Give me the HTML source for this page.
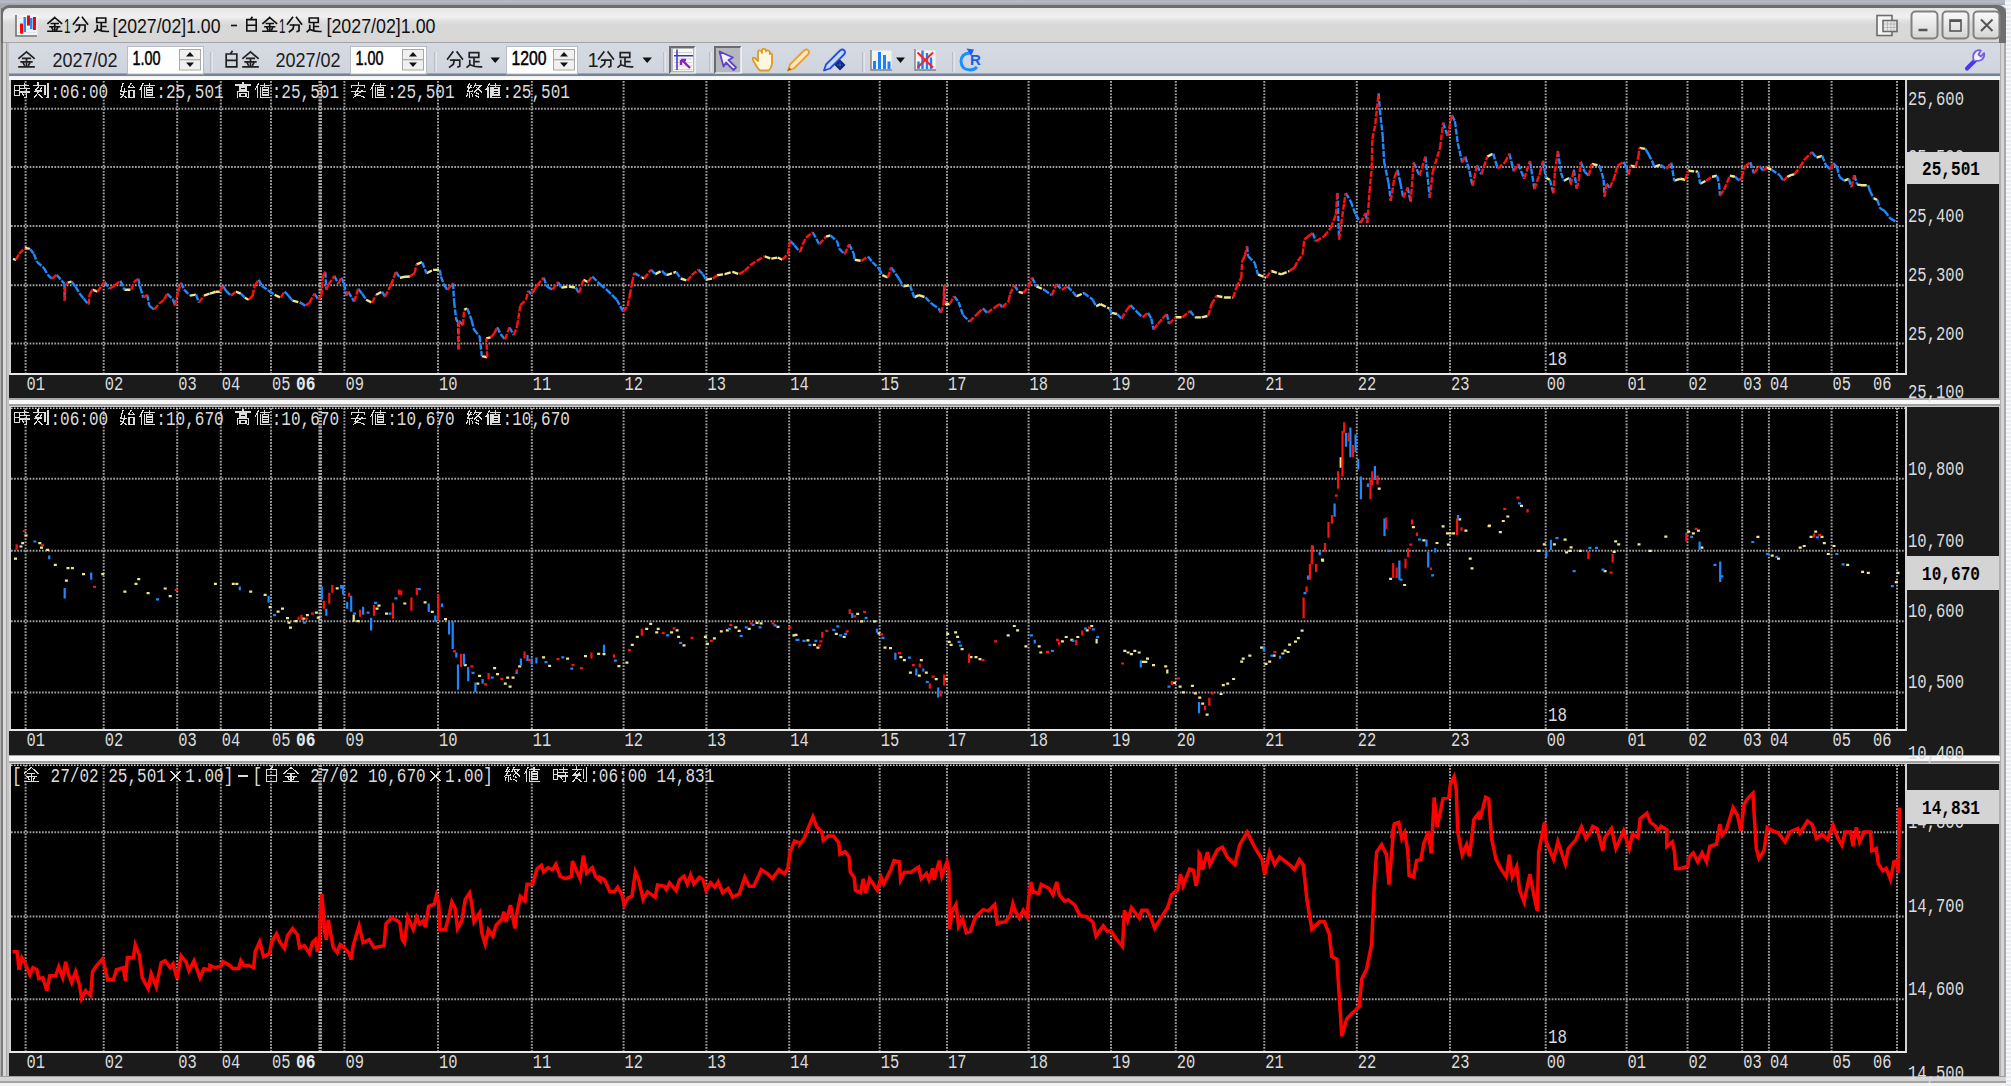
<!DOCTYPE html>
<html><head><meta charset="utf-8"><style>
*{margin:0;padding:0;box-sizing:border-box}
body{width:2011px;height:1086px;position:relative;overflow:hidden;background:#f4f4f4;font-family:"Liberation Sans",sans-serif}
.ab{position:absolute}
text.ax{font-family:"Liberation Mono",monospace;font-size:20px;fill:#dcdcdc;transform-box:fill-box}
text.axb{font-family:"Liberation Mono",monospace;font-size:20px;font-weight:bold;fill:#e8e8e8}
text.pl{font-family:"Liberation Mono",monospace;font-size:20px;fill:#dcdcdc}
text.bx{font-family:"Liberation Mono",monospace;font-size:20px;font-weight:bold;fill:#000}
text.tt{font-family:"Liberation Sans",sans-serif;font-size:21px;fill:#101010}
text.tb{font-family:"Liberation Sans",sans-serif;font-size:20px;fill:#1c1c1c}
text.inp{font-family:"Liberation Sans",sans-serif;font-size:19.5px;fill:#000;stroke:#000;stroke-width:0.5px}
text.rr{font-family:"Liberation Sans",sans-serif;font-size:15px;font-weight:bold;fill:#1a60e0}
text.hd{font-family:"Liberation Mono",monospace;font-size:20px;fill:#dcdcdc}
</style></head><body>
<div class="ab" style="left:0;top:0;width:2011px;height:5px;background:linear-gradient(#aeb2bc,#b8bcc6 35%,#a0a4ac)"></div>
<div class="ab" style="left:2005px;top:0;width:6px;height:1086px;background:repeating-linear-gradient(#e8ecf2 0 2px,#f6f8fb 2px 4px)"></div>
<div class="ab" style="left:0;top:5px;width:14px;height:14px;background:#a4a8b0"></div>
<div class="ab" style="left:1992px;top:5px;width:14px;height:14px;background:#e8ecf2"></div>
<div class="ab" style="left:0;top:5px;width:2006px;height:1078px;background:#c4c4c4;border-radius:8px 8px 0 0"></div>
<div class="ab" style="left:0;top:8px;width:9px;height:1075px;background:linear-gradient(90deg,#b0b0b0 0 1px,#7c7c7c 1px 3px,#d8d8d8 3px 6px,#a8a8a8 6px 7px,#c4c4c4 7px 9px)"></div>
<div class="ab" style="left:1999px;top:8px;width:7px;height:1075px;background:linear-gradient(90deg,#b0b0b0 0 2px,#d4d4d4 2px 5px,#a8a8a8 5px 7px)"></div>
<div class="ab" style="left:0;top:1076px;width:2006px;height:7px;background:linear-gradient(#a0a0a0 0 1px,#d4d4d4 1px 5px,#a4a4a4 5px 7px)"></div>
<div class="ab" style="left:1px;top:5px;width:2005px;height:38px;background:#6e6e6e;border-radius:8px 8px 0 0"></div>
<div class="ab" style="left:3px;top:7.5px;width:1996px;height:35.5px;background:linear-gradient(#e6e6e6,#ececec 5px,#f0f0f0 9px,#e0e0e0 13px,#d8d8d8 17px,#d8d8d8 33.5px,#a4a4a4 34.5px);border-radius:6px 6px 0 0"></div>
<div class="ab" style="left:9px;top:43px;width:1991px;height:34px;background:linear-gradient(#d6dae2,#d0d4dc 30px,#6e7e90 31px,#7c8a9a 33px,#f0f0f0 33px)"></div>
<div class="ab" style="left:9px;top:77px;width:1991px;height:3px;background:#f8f8f8"></div>
<div class="ab" style="left:9px;top:398px;width:1991px;height:10px;background:linear-gradient(#a8a8a8 0 2px,#f8f8f8 2px 6px,#a0a0a0 6px 8px,#d0d0d0 8px 10px)"></div>
<div class="ab" style="left:9px;top:755px;width:1991px;height:9px;background:linear-gradient(#a8a8a8 0 1px,#f8f8f8 1px 6px,#a0a0a0 6px 8px,#d0d0d0 8px 9px)"></div>
<svg width="0" height="0" style="position:absolute"><defs><symbol id="g0" viewBox="0 0 16 16" overflow="visible"><path d="M8 0.8L1 6.8M8 0.8L15 6.8M4.5 7H11.5M3 10.3H13M8 7V14.8M5 11.3L6 13.3M11 11.3L10 13.3M1 15H15" fill="none" stroke="currentColor" style="stroke-width:var(--sw,1.3)" stroke-linecap="square"/></symbol><symbol id="g1" viewBox="0 0 16 16" overflow="visible"><path d="M6 1L1 7.5M10 1L15 7.5M4 8.5H12.5V14.2L10.8 15M7.3 8.5L6.5 12.5L3 15.2" fill="none" stroke="currentColor" style="stroke-width:var(--sw,1.3)" stroke-linecap="square"/></symbol><symbol id="g2" viewBox="0 0 16 16" overflow="visible"><path d="M3.5 1.5H12.5V6H3.5ZM8 6V14M8 10H12.5M4 9V13L1.5 15.2M4.8 13.2Q9 15.2 15 15" fill="none" stroke="currentColor" style="stroke-width:var(--sw,1.3)" stroke-linecap="square"/></symbol><symbol id="g3" viewBox="0 0 16 16" overflow="visible"><path d="M8.5 0.5L7 2.5M3 2.8H13V15H3ZM3 8.8H13" fill="none" stroke="currentColor" style="stroke-width:var(--sw,1.3)" stroke-linecap="square"/></symbol><symbol id="g4" viewBox="0 0 16 16" overflow="visible"><path d="M1 3H5.5V13H1ZM1 8H5.5M7 3.2H15M11 1V6M6.5 6.3H15.5M6.3 9.5H15.5M13.2 6.5V14.6L11.3 15M8.8 11L10 13" fill="none" stroke="currentColor" style="stroke-width:var(--sw,1.3)" stroke-linecap="square"/></symbol><symbol id="g5" viewBox="0 0 16 16" overflow="visible"><path d="M5 0.5V2.3M1 3H10M5.8 4L2 8.5H8.5M8.5 5.5L1.5 15M4.5 11L9.5 15M12 3V11.5M15 0.8V14.8L13.3 15.2" fill="none" stroke="currentColor" style="stroke-width:var(--sw,1.3)" stroke-linecap="square"/></symbol><symbol id="g6" viewBox="0 0 16 16" overflow="visible"><path d="M3.5 1L1.3 9H7M5.5 5.8Q5 12 1.5 15.2M1.3 11.5L6.8 14.8M11.5 1L9 5.3H15M13.5 3.3L15 5.3M9.5 8H14.5V15H9.5Z" fill="none" stroke="currentColor" style="stroke-width:var(--sw,1.3)" stroke-linecap="square"/></symbol><symbol id="g7" viewBox="0 0 16 16" overflow="visible"><path d="M4.5 0.8L1 7.3M3 5V15.2M6 3H15.5M10.5 1V5M8 5H14V12.5H8ZM8 7.5H14M8 10H14M6 5V15H15.7" fill="none" stroke="currentColor" style="stroke-width:var(--sw,1.3)" stroke-linecap="square"/></symbol><symbol id="g8" viewBox="0 0 16 16" overflow="visible"><path d="M8 0V2M1 2.5H15M5 4.5H11V7.5H5ZM2.2 15.2V9.3H13.8V14.5L12.8 15.2M5 11H11V14H5Z" fill="none" stroke="currentColor" style="stroke-width:var(--sw,1.3)" stroke-linecap="square"/></symbol><symbol id="g9" viewBox="0 0 16 16" overflow="visible"><path d="M8 0V2M1.5 5V2.7H14.5V5M8 5.5L4.5 11.8Q10 12.5 14 15M11.8 8L3 15.2M1 9.2H15" fill="none" stroke="currentColor" style="stroke-width:var(--sw,1.3)" stroke-linecap="square"/></symbol><symbol id="g10" viewBox="0 0 16 16" overflow="visible"><path d="M4 0.8L1.5 5H5.5M5.3 2.8L1.3 9.3L6.5 8.5M4 9V15.2M1.7 11.3L1 14M6 11L7 13.3M10 0.8L8 4.8M9.5 3H15L9 9.5M10.3 4.5L15.5 9.5M11 10.5L12.7 11.5M10 13L12.5 14.5" fill="none" stroke="currentColor" style="stroke-width:var(--sw,1.3)" stroke-linecap="square"/></symbol></defs></svg>
<svg width="2011" height="1086" style="position:absolute;left:0;top:0" shape-rendering="crispEdges">
<defs><clipPath id="c1"><rect x="11" y="80" width="1894" height="293"/></clipPath><clipPath id="c2"><rect x="11" y="408" width="1894" height="321"/></clipPath><clipPath id="c3"><rect x="11" y="765" width="1894" height="286"/></clipPath></defs>
<rect x="9" y="80" width="1990" height="318" fill="#1b1b1b"/>
<rect x="10" y="80" width="1896" height="294" fill="#000"/>
<path d="M11 108.8H1905 M11 166.9H1905 M11 225.9H1905 M11 285.2H1905 M11 343.6H1905 M25.6 81V373 M103.7 81V373 M177.2 81V373 M220.8 81V373 M271.0 81V373 M320.2 81V373 M344.4 81V373 M438.0 81V373 M531.8 81V373 M623.6 81V373 M706.4 81V373 M789.2 81V373 M879.7 81V373 M947.0 81V373 M1028.6 81V373 M1111.0 81V373 M1175.8 81V373 M1264.3 81V373 M1356.8 81V373 M1450.0 81V373 M1545.7 81V373 M1626.6 81V373 M1687.5 81V373 M1742.2 81V373 M1768.9 81V373 M1831.6 81V373 M1897.0 81V373" stroke="#a0a0a0" stroke-width="2" stroke-dasharray="1.7 1.4" fill="none" shape-rendering="auto"/>
<path d="M320.2 81V373" stroke="#b0b0b0" stroke-width="3.6" stroke-dasharray="1.7 1.4" fill="none" shape-rendering="auto"/>
<path d="M10 80V374H1906V80" stroke="#e8e8e8" stroke-width="1.8" fill="none" shape-rendering="auto"/>
<text x="26.6" y="389.5" class="ax" textLength="18.5" lengthAdjust="spacingAndGlyphs">01</text>
<text x="104.7" y="389.5" class="ax" textLength="18.5" lengthAdjust="spacingAndGlyphs">02</text>
<text x="178.2" y="389.5" class="ax" textLength="18.5" lengthAdjust="spacingAndGlyphs">03</text>
<text x="221.8" y="389.5" class="ax" textLength="18.5" lengthAdjust="spacingAndGlyphs">04</text>
<text x="272.0" y="389.5" class="ax" textLength="18.5" lengthAdjust="spacingAndGlyphs">05</text>
<text x="345.4" y="389.5" class="ax" textLength="18.5" lengthAdjust="spacingAndGlyphs">09</text>
<text x="439.0" y="389.5" class="ax" textLength="18.5" lengthAdjust="spacingAndGlyphs">10</text>
<text x="532.8" y="389.5" class="ax" textLength="18.5" lengthAdjust="spacingAndGlyphs">11</text>
<text x="624.6" y="389.5" class="ax" textLength="18.5" lengthAdjust="spacingAndGlyphs">12</text>
<text x="707.4" y="389.5" class="ax" textLength="18.5" lengthAdjust="spacingAndGlyphs">13</text>
<text x="790.2" y="389.5" class="ax" textLength="18.5" lengthAdjust="spacingAndGlyphs">14</text>
<text x="880.7" y="389.5" class="ax" textLength="18.5" lengthAdjust="spacingAndGlyphs">15</text>
<text x="948.0" y="389.5" class="ax" textLength="18.5" lengthAdjust="spacingAndGlyphs">17</text>
<text x="1029.6" y="389.5" class="ax" textLength="18.5" lengthAdjust="spacingAndGlyphs">18</text>
<text x="1112.0" y="389.5" class="ax" textLength="18.5" lengthAdjust="spacingAndGlyphs">19</text>
<text x="1176.8" y="389.5" class="ax" textLength="18.5" lengthAdjust="spacingAndGlyphs">20</text>
<text x="1265.3" y="389.5" class="ax" textLength="18.5" lengthAdjust="spacingAndGlyphs">21</text>
<text x="1357.8" y="389.5" class="ax" textLength="18.5" lengthAdjust="spacingAndGlyphs">22</text>
<text x="1451.0" y="389.5" class="ax" textLength="18.5" lengthAdjust="spacingAndGlyphs">23</text>
<text x="1546.7" y="389.5" class="ax" textLength="18.5" lengthAdjust="spacingAndGlyphs">00</text>
<text x="1627.6" y="389.5" class="ax" textLength="18.5" lengthAdjust="spacingAndGlyphs">01</text>
<text x="1688.5" y="389.5" class="ax" textLength="18.5" lengthAdjust="spacingAndGlyphs">02</text>
<text x="1743.2" y="389.5" class="ax" textLength="18.5" lengthAdjust="spacingAndGlyphs">03</text>
<text x="1769.9" y="389.5" class="ax" textLength="18.5" lengthAdjust="spacingAndGlyphs">04</text>
<text x="1832.6" y="389.5" class="ax" textLength="18.5" lengthAdjust="spacingAndGlyphs">05</text>
<text x="296" y="389.5" class="axb" textLength="19.5" lengthAdjust="spacingAndGlyphs">06</text>
<text x="1873" y="389.5" class="ax" textLength="18.5" lengthAdjust="spacingAndGlyphs">06</text>
<text x="1908" y="104.8" class="pl" textLength="56" lengthAdjust="spacingAndGlyphs">25,600</text>
<text x="1908" y="162.9" class="pl" textLength="56" lengthAdjust="spacingAndGlyphs">25,500</text>
<text x="1908" y="221.9" class="pl" textLength="56" lengthAdjust="spacingAndGlyphs">25,400</text>
<text x="1908" y="281.2" class="pl" textLength="56" lengthAdjust="spacingAndGlyphs">25,300</text>
<text x="1908" y="339.6" class="pl" textLength="56" lengthAdjust="spacingAndGlyphs">25,200</text>
<text x="1908" y="398.3" class="pl" textLength="56" lengthAdjust="spacingAndGlyphs">25,100</text>
<rect x="1906" y="151.5" width="93" height="32.5" fill="#d4d4d4"/>
<text x="1922" y="174.8" class="bx" textLength="58" lengthAdjust="spacingAndGlyphs">25,501</text>
<text x="1548" y="365" class="ax" textLength="19" lengthAdjust="spacingAndGlyphs">18</text>
<use href="#g4" x="13.6" y="82.5" width="16.0" height="16.0" style="color:#dcdcdc;--sw:1.2"/><use href="#g5" x="32.9" y="82.5" width="16.0" height="16.0" style="color:#dcdcdc;--sw:1.2"/><text x="50.5" y="98" class="hd" textLength="67.3" lengthAdjust="spacingAndGlyphs" xml:space="preserve">:06:00 </text><use href="#g6" x="119.4" y="82.5" width="16.0" height="16.0" style="color:#dcdcdc;--sw:1.2"/><use href="#g7" x="138.7" y="82.5" width="16.0" height="16.0" style="color:#dcdcdc;--sw:1.2"/><text x="156.3" y="98" class="hd" textLength="77.0" lengthAdjust="spacingAndGlyphs" xml:space="preserve">:25,501 </text><use href="#g8" x="234.9" y="82.5" width="16.0" height="16.0" style="color:#dcdcdc;--sw:1.2"/><use href="#g7" x="254.1" y="82.5" width="16.0" height="16.0" style="color:#dcdcdc;--sw:1.2"/><text x="271.7" y="98" class="hd" textLength="77.0" lengthAdjust="spacingAndGlyphs" xml:space="preserve">:25,501 </text><use href="#g9" x="350.3" y="82.5" width="16.0" height="16.0" style="color:#dcdcdc;--sw:1.2"/><use href="#g7" x="369.6" y="82.5" width="16.0" height="16.0" style="color:#dcdcdc;--sw:1.2"/><text x="387.2" y="98" class="hd" textLength="77.0" lengthAdjust="spacingAndGlyphs" xml:space="preserve">:25,501 </text><use href="#g10" x="465.8" y="82.5" width="16.0" height="16.0" style="color:#dcdcdc;--sw:1.2"/><use href="#g7" x="485.0" y="82.5" width="16.0" height="16.0" style="color:#dcdcdc;--sw:1.2"/><text x="502.6" y="98" class="hd" textLength="67.3" lengthAdjust="spacingAndGlyphs" xml:space="preserve">:25,501</text>
<rect x="9" y="407" width="1990" height="348" fill="#1b1b1b"/>
<rect x="10" y="407" width="1896" height="323" fill="#000"/>
<path d="M11 478.8H1905 M11 550.7H1905 M11 621.3H1905 M11 692.6H1905 M25.6 408V729 M103.7 408V729 M177.2 408V729 M220.8 408V729 M271.0 408V729 M320.2 408V729 M344.4 408V729 M438.0 408V729 M531.8 408V729 M623.6 408V729 M706.4 408V729 M789.2 408V729 M879.7 408V729 M947.0 408V729 M1028.6 408V729 M1111.0 408V729 M1175.8 408V729 M1264.3 408V729 M1356.8 408V729 M1450.0 408V729 M1545.7 408V729 M1626.6 408V729 M1687.5 408V729 M1742.2 408V729 M1768.9 408V729 M1831.6 408V729 M1897.0 408V729" stroke="#a0a0a0" stroke-width="2" stroke-dasharray="1.7 1.4" fill="none" shape-rendering="auto"/>
<path d="M320.2 408V729" stroke="#b0b0b0" stroke-width="3.6" stroke-dasharray="1.7 1.4" fill="none" shape-rendering="auto"/>
<path d="M10 407V730H1906V407" stroke="#e8e8e8" stroke-width="1.8" fill="none" shape-rendering="auto"/>
<path d="M11 408.2H1906" stroke="#c8c8c8" stroke-width="1.4" stroke-dasharray="1.6 1.4" fill="none" shape-rendering="auto"/>
<text x="26.6" y="745.5" class="ax" textLength="18.5" lengthAdjust="spacingAndGlyphs">01</text>
<text x="104.7" y="745.5" class="ax" textLength="18.5" lengthAdjust="spacingAndGlyphs">02</text>
<text x="178.2" y="745.5" class="ax" textLength="18.5" lengthAdjust="spacingAndGlyphs">03</text>
<text x="221.8" y="745.5" class="ax" textLength="18.5" lengthAdjust="spacingAndGlyphs">04</text>
<text x="272.0" y="745.5" class="ax" textLength="18.5" lengthAdjust="spacingAndGlyphs">05</text>
<text x="345.4" y="745.5" class="ax" textLength="18.5" lengthAdjust="spacingAndGlyphs">09</text>
<text x="439.0" y="745.5" class="ax" textLength="18.5" lengthAdjust="spacingAndGlyphs">10</text>
<text x="532.8" y="745.5" class="ax" textLength="18.5" lengthAdjust="spacingAndGlyphs">11</text>
<text x="624.6" y="745.5" class="ax" textLength="18.5" lengthAdjust="spacingAndGlyphs">12</text>
<text x="707.4" y="745.5" class="ax" textLength="18.5" lengthAdjust="spacingAndGlyphs">13</text>
<text x="790.2" y="745.5" class="ax" textLength="18.5" lengthAdjust="spacingAndGlyphs">14</text>
<text x="880.7" y="745.5" class="ax" textLength="18.5" lengthAdjust="spacingAndGlyphs">15</text>
<text x="948.0" y="745.5" class="ax" textLength="18.5" lengthAdjust="spacingAndGlyphs">17</text>
<text x="1029.6" y="745.5" class="ax" textLength="18.5" lengthAdjust="spacingAndGlyphs">18</text>
<text x="1112.0" y="745.5" class="ax" textLength="18.5" lengthAdjust="spacingAndGlyphs">19</text>
<text x="1176.8" y="745.5" class="ax" textLength="18.5" lengthAdjust="spacingAndGlyphs">20</text>
<text x="1265.3" y="745.5" class="ax" textLength="18.5" lengthAdjust="spacingAndGlyphs">21</text>
<text x="1357.8" y="745.5" class="ax" textLength="18.5" lengthAdjust="spacingAndGlyphs">22</text>
<text x="1451.0" y="745.5" class="ax" textLength="18.5" lengthAdjust="spacingAndGlyphs">23</text>
<text x="1546.7" y="745.5" class="ax" textLength="18.5" lengthAdjust="spacingAndGlyphs">00</text>
<text x="1627.6" y="745.5" class="ax" textLength="18.5" lengthAdjust="spacingAndGlyphs">01</text>
<text x="1688.5" y="745.5" class="ax" textLength="18.5" lengthAdjust="spacingAndGlyphs">02</text>
<text x="1743.2" y="745.5" class="ax" textLength="18.5" lengthAdjust="spacingAndGlyphs">03</text>
<text x="1769.9" y="745.5" class="ax" textLength="18.5" lengthAdjust="spacingAndGlyphs">04</text>
<text x="1832.6" y="745.5" class="ax" textLength="18.5" lengthAdjust="spacingAndGlyphs">05</text>
<text x="296" y="745.5" class="axb" textLength="19.5" lengthAdjust="spacingAndGlyphs">06</text>
<text x="1873" y="745.5" class="ax" textLength="18.5" lengthAdjust="spacingAndGlyphs">06</text>
<text x="1908" y="474.8" class="pl" textLength="56" lengthAdjust="spacingAndGlyphs">10,800</text>
<text x="1908" y="546.7" class="pl" textLength="56" lengthAdjust="spacingAndGlyphs">10,700</text>
<text x="1908" y="617.3" class="pl" textLength="56" lengthAdjust="spacingAndGlyphs">10,600</text>
<text x="1908" y="688.2" class="pl" textLength="56" lengthAdjust="spacingAndGlyphs">10,500</text>
<text x="1908" y="759.2" class="pl" textLength="56" lengthAdjust="spacingAndGlyphs">10,400</text>
<rect x="1906" y="556.4" width="93" height="33.10000000000002" fill="#d4d4d4"/>
<text x="1922" y="580.0" class="bx" textLength="58" lengthAdjust="spacingAndGlyphs">10,670</text>
<text x="1548" y="721" class="ax" textLength="19" lengthAdjust="spacingAndGlyphs">18</text>
<use href="#g4" x="13.6" y="409.5" width="16.0" height="16.0" style="color:#dcdcdc;--sw:1.2"/><use href="#g5" x="32.9" y="409.5" width="16.0" height="16.0" style="color:#dcdcdc;--sw:1.2"/><text x="50.5" y="425" class="hd" textLength="67.3" lengthAdjust="spacingAndGlyphs" xml:space="preserve">:06:00 </text><use href="#g6" x="119.4" y="409.5" width="16.0" height="16.0" style="color:#dcdcdc;--sw:1.2"/><use href="#g7" x="138.7" y="409.5" width="16.0" height="16.0" style="color:#dcdcdc;--sw:1.2"/><text x="156.3" y="425" class="hd" textLength="77.0" lengthAdjust="spacingAndGlyphs" xml:space="preserve">:10,670 </text><use href="#g8" x="234.9" y="409.5" width="16.0" height="16.0" style="color:#dcdcdc;--sw:1.2"/><use href="#g7" x="254.1" y="409.5" width="16.0" height="16.0" style="color:#dcdcdc;--sw:1.2"/><text x="271.7" y="425" class="hd" textLength="77.0" lengthAdjust="spacingAndGlyphs" xml:space="preserve">:10,670 </text><use href="#g9" x="350.3" y="409.5" width="16.0" height="16.0" style="color:#dcdcdc;--sw:1.2"/><use href="#g7" x="369.6" y="409.5" width="16.0" height="16.0" style="color:#dcdcdc;--sw:1.2"/><text x="387.2" y="425" class="hd" textLength="77.0" lengthAdjust="spacingAndGlyphs" xml:space="preserve">:10,670 </text><use href="#g10" x="465.8" y="409.5" width="16.0" height="16.0" style="color:#dcdcdc;--sw:1.2"/><use href="#g7" x="485.0" y="409.5" width="16.0" height="16.0" style="color:#dcdcdc;--sw:1.2"/><text x="502.6" y="425" class="hd" textLength="67.3" lengthAdjust="spacingAndGlyphs" xml:space="preserve">:10,670</text>
<rect x="9" y="764" width="1990" height="312" fill="#1b1b1b"/>
<rect x="10" y="764" width="1896" height="288" fill="#000"/>
<path d="M11 832.2H1905 M11 916.4H1905 M11 999.2H1905 M25.6 765V1051 M103.7 765V1051 M177.2 765V1051 M220.8 765V1051 M271.0 765V1051 M320.2 765V1051 M344.4 765V1051 M438.0 765V1051 M531.8 765V1051 M623.6 765V1051 M706.4 765V1051 M789.2 765V1051 M879.7 765V1051 M947.0 765V1051 M1028.6 765V1051 M1111.0 765V1051 M1175.8 765V1051 M1264.3 765V1051 M1356.8 765V1051 M1450.0 765V1051 M1545.7 765V1051 M1626.6 765V1051 M1687.5 765V1051 M1742.2 765V1051 M1768.9 765V1051 M1831.6 765V1051 M1897.0 765V1051" stroke="#a0a0a0" stroke-width="2" stroke-dasharray="1.7 1.4" fill="none" shape-rendering="auto"/>
<path d="M320.2 765V1051" stroke="#b0b0b0" stroke-width="3.6" stroke-dasharray="1.7 1.4" fill="none" shape-rendering="auto"/>
<path d="M10 764V1052H1906V764" stroke="#e8e8e8" stroke-width="1.8" fill="none" shape-rendering="auto"/>
<path d="M11 765.2H1906" stroke="#c8c8c8" stroke-width="1.4" stroke-dasharray="1.6 1.4" fill="none" shape-rendering="auto"/>
<text x="26.6" y="1067.5" class="ax" textLength="18.5" lengthAdjust="spacingAndGlyphs">01</text>
<text x="104.7" y="1067.5" class="ax" textLength="18.5" lengthAdjust="spacingAndGlyphs">02</text>
<text x="178.2" y="1067.5" class="ax" textLength="18.5" lengthAdjust="spacingAndGlyphs">03</text>
<text x="221.8" y="1067.5" class="ax" textLength="18.5" lengthAdjust="spacingAndGlyphs">04</text>
<text x="272.0" y="1067.5" class="ax" textLength="18.5" lengthAdjust="spacingAndGlyphs">05</text>
<text x="345.4" y="1067.5" class="ax" textLength="18.5" lengthAdjust="spacingAndGlyphs">09</text>
<text x="439.0" y="1067.5" class="ax" textLength="18.5" lengthAdjust="spacingAndGlyphs">10</text>
<text x="532.8" y="1067.5" class="ax" textLength="18.5" lengthAdjust="spacingAndGlyphs">11</text>
<text x="624.6" y="1067.5" class="ax" textLength="18.5" lengthAdjust="spacingAndGlyphs">12</text>
<text x="707.4" y="1067.5" class="ax" textLength="18.5" lengthAdjust="spacingAndGlyphs">13</text>
<text x="790.2" y="1067.5" class="ax" textLength="18.5" lengthAdjust="spacingAndGlyphs">14</text>
<text x="880.7" y="1067.5" class="ax" textLength="18.5" lengthAdjust="spacingAndGlyphs">15</text>
<text x="948.0" y="1067.5" class="ax" textLength="18.5" lengthAdjust="spacingAndGlyphs">17</text>
<text x="1029.6" y="1067.5" class="ax" textLength="18.5" lengthAdjust="spacingAndGlyphs">18</text>
<text x="1112.0" y="1067.5" class="ax" textLength="18.5" lengthAdjust="spacingAndGlyphs">19</text>
<text x="1176.8" y="1067.5" class="ax" textLength="18.5" lengthAdjust="spacingAndGlyphs">20</text>
<text x="1265.3" y="1067.5" class="ax" textLength="18.5" lengthAdjust="spacingAndGlyphs">21</text>
<text x="1357.8" y="1067.5" class="ax" textLength="18.5" lengthAdjust="spacingAndGlyphs">22</text>
<text x="1451.0" y="1067.5" class="ax" textLength="18.5" lengthAdjust="spacingAndGlyphs">23</text>
<text x="1546.7" y="1067.5" class="ax" textLength="18.5" lengthAdjust="spacingAndGlyphs">00</text>
<text x="1627.6" y="1067.5" class="ax" textLength="18.5" lengthAdjust="spacingAndGlyphs">01</text>
<text x="1688.5" y="1067.5" class="ax" textLength="18.5" lengthAdjust="spacingAndGlyphs">02</text>
<text x="1743.2" y="1067.5" class="ax" textLength="18.5" lengthAdjust="spacingAndGlyphs">03</text>
<text x="1769.9" y="1067.5" class="ax" textLength="18.5" lengthAdjust="spacingAndGlyphs">04</text>
<text x="1832.6" y="1067.5" class="ax" textLength="18.5" lengthAdjust="spacingAndGlyphs">05</text>
<text x="296" y="1067.5" class="axb" textLength="19.5" lengthAdjust="spacingAndGlyphs">06</text>
<text x="1873" y="1067.5" class="ax" textLength="18.5" lengthAdjust="spacingAndGlyphs">06</text>
<text x="1908" y="828.2" class="pl" textLength="56" lengthAdjust="spacingAndGlyphs">14,800</text>
<text x="1908" y="912.4" class="pl" textLength="56" lengthAdjust="spacingAndGlyphs">14,700</text>
<text x="1908" y="995.2" class="pl" textLength="56" lengthAdjust="spacingAndGlyphs">14,600</text>
<text x="1908" y="1078.7" class="pl" textLength="56" lengthAdjust="spacingAndGlyphs">14,500</text>
<rect x="1906" y="790" width="93" height="34" fill="#d4d4d4"/>
<text x="1922" y="814.0" class="bx" textLength="58" lengthAdjust="spacingAndGlyphs">14,831</text>
<text x="1548" y="1043" class="ax" textLength="19" lengthAdjust="spacingAndGlyphs">18</text>
<text x="12.0" y="782" class="hd" textLength="9.6" lengthAdjust="spacingAndGlyphs" xml:space="preserve">[</text><use href="#g0" x="23.2" y="766.5" width="16.0" height="16.0" style="color:#dcdcdc;--sw:1.2"/><text x="40.9" y="782" class="hd" textLength="125.1" lengthAdjust="spacingAndGlyphs" xml:space="preserve"> 27/02 25,501</text><path d="M170.5 771l10 10m0 -10l-10 10" stroke="#dcdcdc" stroke-width="1.3" fill="none"/><text x="185.2" y="782" class="hd" textLength="48.1" lengthAdjust="spacingAndGlyphs" xml:space="preserve">1.00]</text><path d="M237.9 776h10" stroke="#dcdcdc" stroke-width="1.4" fill="none"/><text x="252.5" y="782" class="hd" textLength="9.6" lengthAdjust="spacingAndGlyphs" xml:space="preserve">[</text><use href="#g3" x="263.7" y="766.5" width="16.0" height="16.0" style="color:#dcdcdc;--sw:1.2"/><use href="#g0" x="283.0" y="766.5" width="16.0" height="16.0" style="color:#dcdcdc;--sw:1.2"/><text x="300.6" y="782" class="hd" textLength="125.1" lengthAdjust="spacingAndGlyphs" xml:space="preserve"> 27/02 10,670</text><path d="M430.3 771l10 10m0 -10l-10 10" stroke="#dcdcdc" stroke-width="1.3" fill="none"/><text x="444.9" y="782" class="hd" textLength="57.7" lengthAdjust="spacingAndGlyphs" xml:space="preserve">1.00] </text><use href="#g10" x="504.2" y="766.5" width="16.0" height="16.0" style="color:#dcdcdc;--sw:1.2"/><use href="#g7" x="523.5" y="766.5" width="16.0" height="16.0" style="color:#dcdcdc;--sw:1.2"/><text x="541.1" y="782" class="hd" textLength="9.6" lengthAdjust="spacingAndGlyphs" xml:space="preserve"> </text><use href="#g4" x="552.3" y="766.5" width="16.0" height="16.0" style="color:#dcdcdc;--sw:1.2"/><use href="#g5" x="571.6" y="766.5" width="16.0" height="16.0" style="color:#dcdcdc;--sw:1.2"/><text x="589.2" y="782" class="hd" textLength="125.1" lengthAdjust="spacingAndGlyphs" xml:space="preserve">:06:00 14,831</text>
<path d="M13.0 258.8L16.0 259.8M24.9 247.9L29.9 248.9M67.7 282.7L71.7 281.7M92.5 289.7L97.5 291.7M124.4 289.7L131.3 289.7M190.0 295.6L196.0 294.6M203.9 295.6L210.0 293.6M210.0 293.6L215.9 291.7M215.9 291.7L219.9 291.7M235.8 291.7L240.8 293.7M244.8 297.7L248.8 299.7M274.6 294.7L280.6 297.7M292.5 300.7L300.5 302.7M366.1 299.7L372.1 302.7M376.1 294.7L382.0 291.7M399.9 277.8L405.0 276.8M405.0 276.8L409.9 276.5M416.6 264.4L422.1 262.2M426.5 273.2L433.1 269.9M433.1 269.9L439.8 269.9M456.4 320.7L458.0 320.7M464.1 309.7L467.4 308.6M481.8 356.1L487.3 357.2M486.2 338.4L490.6 337.3M561.3 287.6L569.1 286.5M569.1 286.5L575.7 287.6M583.4 279.8L587.8 282.0M642.0 277.4L644.2 278.5M655.2 274.1L661.9 270.8M666.3 275.2L676.2 271.9M680.7 278.5L687.3 280.7M706.1 279.6L712.7 278.5M717.1 275.2L724.9 274.1M724.9 274.1L732.6 271.9M732.6 271.9L739.2 274.1M764.6 256.4L771.3 258.6M771.3 258.6L777.9 257.5M777.9 257.5L782.3 259.7M825.9 236.6L830.4 235.5M854.7 259.8L861.3 260.9M882.3 275.2L887.8 277.5M903.3 286.3L909.9 285.2M914.3 297.3L918.8 295.1M918.8 295.1L925.4 297.3M944.7 304.0L949.7 304.0M1018.7 291.9L1023.1 293.0M1036.4 286.4L1044.1 289.7M1076.2 296.4L1083.9 293.0M1096.1 306.3L1100.5 304.1M1100.5 304.1L1109.3 308.5M1111.5 312.9L1117.1 314.0M1175.6 317.3L1182.3 317.3M1194.9 317.4L1201.6 317.4M1201.6 317.4L1208.2 315.8M1216.5 295.9L1224.8 297.5M1224.8 297.5L1233.1 297.5M1257.9 274.3L1266.2 277.6M1271.2 271.0L1281.1 274.3M1281.1 274.3L1289.4 271.0M1487.3 156.6L1493.2 153.6M1545.9 177.7L1549.9 179.7M1563.8 180.7L1569.8 177.7M1591.7 163.8L1599.6 165.8M1630.5 165.8L1635.4 166.8M1639.4 147.9L1645.4 148.9M1654.3 166.8L1660.3 164.8M1674.2 180.7L1680.2 178.7M1680.2 178.7L1685.2 179.7M1688.2 170.8L1698.1 171.8M1700.1 183.7L1706.1 180.7M1712.0 176.7L1717.0 175.7M1729.9 175.7L1735.0 176.7M1766.8 167.7L1771.4 169.6M1787.1 177.0L1790.8 175.1M1790.8 175.1L1794.5 174.2M1816.5 157.6L1822.1 155.8M1844.2 180.6L1848.8 178.8M1857.1 184.3L1860.7 185.2M1860.7 185.2L1868.1 185.2M1873.6 198.1L1877.3 200.0" stroke="#f0e68c" stroke-width="2.4" fill="none" stroke-dasharray="6 1.5" clip-path="url(#c1)" shape-rendering="auto"/>
<path d="M29.9 248.9L33.9 253.9M33.9 253.9L36.9 261.8M36.9 261.8L43.8 267.8M43.8 267.8L47.8 274.8M47.8 274.8L51.8 278.7M56.7 274.8L61.7 280.7M61.7 280.7L64.5 283.7M64.5 283.7L64.7 300.6M71.7 281.7L75.6 286.7M75.6 286.7L79.6 293.6M79.6 293.6L83.6 298.6M83.6 298.6L88.6 304.6M104.5 281.7L109.5 288.7M120.4 280.7L124.4 289.7M138.3 278.7L140.3 287.7M140.3 287.7L143.3 297.6M147.2 294.6L149.2 305.6M149.2 305.6L154.2 309.6M167.1 293.6L173.1 299.6M173.1 299.6L175.1 305.6M181.1 282.7L184.0 289.7M184.0 289.7L190.0 295.6M196.0 294.6L199.0 302.6M222.9 285.7L225.9 290.7M225.9 290.7L230.9 295.7M240.8 293.7L244.8 297.7M258.7 279.8L261.7 285.7M261.7 285.7L268.6 290.7M268.6 290.7L274.6 294.7M284.6 291.7L288.5 295.7M288.5 295.7L292.5 300.7M300.5 302.7L305.4 305.6M314.4 293.7L318.4 299.7M325.3 271.8L326.3 289.7M334.3 275.8L338.3 283.8M341.3 277.8L344.2 283.8M344.2 283.8L346.2 295.7M348.2 291.7L354.2 301.7M358.2 288.7L362.1 293.7M362.1 293.7L366.1 299.7M382.0 291.7L385.0 296.7M395.9 271.8L399.9 277.8M422.1 262.2L426.5 273.2M439.8 269.9L440.9 276.5M440.9 276.5L444.2 285.4M444.2 285.4L447.5 289.8M453.0 283.1L454.1 301.9M454.1 301.9L456.4 320.7M458.0 320.7L458.6 349.4M459.1 320.7L463.0 325.1M467.4 308.6L471.8 320.7M471.8 320.7L474.0 329.6M474.0 329.6L479.6 336.2M479.6 336.2L481.8 356.1M497.2 327.3L500.6 334.0M500.6 334.0L505.0 339.5M509.4 327.3L513.8 335.1M528.2 290.9L531.5 294.2M543.6 277.6L547.0 286.5M547.0 286.5L552.5 289.8M558.0 282.0L561.3 287.6M575.7 287.6L579.0 293.1M592.3 276.5L600.0 284.3M600.0 284.3L606.6 289.6M606.6 289.6L612.2 295.1M612.2 295.1L616.6 299.5M616.6 299.5L623.2 311.7M634.3 273.0L642.0 277.4M650.8 269.7L655.2 274.1M661.9 270.8L666.3 275.2M676.2 271.9L680.7 278.5M698.3 269.7L702.8 274.1M702.8 274.1L706.1 279.6M790.1 240.9L794.5 245.4M794.5 245.4L800.0 252.0M812.7 232.2L819.3 244.3M830.4 235.5L837.0 241.0M837.0 241.0L839.2 248.7M839.2 248.7L844.7 254.3M849.1 244.3L853.6 253.1M853.6 253.1L854.7 259.8M867.9 256.5L872.3 262.0M872.3 262.0L879.0 268.6M879.0 268.6L882.3 275.2M891.1 267.5L898.9 278.6M898.9 278.6L903.3 286.3M909.9 285.2L914.3 297.3M925.4 297.3L932.0 304.0M932.0 304.0L938.6 308.4M938.6 308.4L940.9 312.8M944.2 285.2L944.7 304.0M954.1 296.2L958.5 301.8M958.5 301.8L963.0 315.0M963.0 315.0L969.6 321.7M982.8 308.4L987.3 312.8M999.9 304.1L1002.2 307.4M1014.3 285.3L1018.7 291.9M1032.0 277.6L1036.4 286.4M1044.1 289.7L1051.9 295.2M1056.3 284.2L1061.8 289.7M1067.3 286.4L1072.9 291.9M1072.9 291.9L1076.2 296.4M1083.9 293.0L1092.8 299.7M1092.8 299.7L1096.1 306.3M1109.3 308.5L1111.5 312.9M1117.1 314.0L1121.5 318.5M1130.3 305.2L1137.0 311.8M1137.0 311.8L1142.5 317.3M1148.0 312.9L1151.3 318.5M1151.3 318.5L1153.5 329.5M1166.8 314.0L1169.0 324.0M1190.0 310.8L1194.9 317.4M1247.1 246.2L1248.0 256.1M1248.0 256.1L1254.6 262.7M1254.6 262.7L1257.9 274.3M1312.6 232.9L1315.9 241.2M1337.4 193.1L1339.1 239.5M1345.7 193.1L1350.7 201.4M1350.7 201.4L1355.7 214.7M1355.7 214.7L1360.6 223.0M1365.6 213.0L1367.3 223.0M1378.6 93.3L1379.8 109.5M1379.8 109.5L1382.7 136.0M1382.7 136.0L1384.2 162.5M1384.2 162.5L1388.6 183.1M1388.6 183.1L1390.8 200.8M1397.4 169.8L1400.4 183.1M1400.4 183.1L1403.3 197.8M1407.7 187.5L1410.7 202.2M1413.6 162.5L1419.5 175.7M1425.4 156.6L1429.8 197.8M1443.1 122.7L1447.5 136.0M1451.9 115.3L1454.9 121.2M1454.9 121.2L1457.8 143.3M1457.8 143.3L1462.2 162.5M1465.2 156.6L1469.6 171.3M1469.6 171.3L1472.5 186.0M1477.0 165.4L1481.4 174.3M1493.2 153.6L1497.6 168.4M1509.4 153.6L1513.8 171.3M1518.2 163.9L1524.1 178.7M1530.0 161.0L1534.4 189.0M1543.0 160.8L1545.9 177.7M1549.9 179.7L1553.4 193.6M1557.9 150.9L1560.9 172.8M1560.9 172.8L1563.8 180.7M1569.8 177.7L1570.8 184.7M1573.8 169.8L1576.8 188.7M1580.7 161.8L1584.7 171.8M1584.7 171.8L1588.7 175.7M1599.6 165.8L1603.6 179.7M1603.6 179.7L1604.6 196.6M1606.6 183.7L1609.6 187.7M1623.5 161.8L1626.5 167.8M1626.5 167.8L1628.5 174.8M1645.4 148.9L1648.4 153.9M1648.4 153.9L1652.4 161.8M1652.4 161.8L1654.3 166.8M1660.3 164.8L1666.3 168.8M1671.3 162.8L1674.2 180.7M1698.1 171.8L1700.1 183.7M1717.0 175.7L1719.0 183.7M1719.0 183.7L1720.0 195.6M1735.0 176.7L1739.2 180.6M1750.3 162.2L1753.9 173.3M1759.5 165.9L1763.1 170.5M1771.4 169.6L1779.7 175.1M1779.7 175.1L1783.4 180.6M1811.9 152.1L1816.5 157.6M1822.1 155.8L1825.8 165.0M1825.8 165.0L1830.4 169.6M1833.1 163.1L1836.8 166.8M1836.8 166.8L1839.6 177.0M1839.6 177.0L1844.2 180.6M1848.8 178.8L1851.5 187.1M1854.3 175.1L1857.1 184.3M1868.1 185.2L1869.9 190.8M1869.9 190.8L1873.6 198.1M1877.3 200.0L1880.1 208.3M1880.1 208.3L1884.7 211.0M1884.7 211.0L1890.2 218.4M1890.2 218.4L1896.6 222.1" stroke="#1e88ff" stroke-width="2.4" fill="none" stroke-dasharray="6 1.5" clip-path="url(#c1)" shape-rendering="auto"/>
<path d="M16.0 259.8L19.0 253.9M19.0 253.9L24.9 247.9M51.8 278.7L56.7 274.8M64.7 300.6L65.2 285.7M65.2 285.7L67.7 282.7M88.6 304.6L89.6 294.6M89.6 294.6L92.5 289.7M97.5 291.7L104.5 281.7M109.5 288.7L114.4 285.7M114.4 285.7L120.4 280.7M131.3 289.7L134.3 281.7M134.3 281.7L138.3 278.7M143.3 297.6L147.2 294.6M154.2 309.6L159.2 303.6M159.2 303.6L164.2 299.6M164.2 299.6L167.1 293.6M175.1 305.6L178.1 291.7M178.1 291.7L181.1 282.7M199.0 302.6L203.9 295.6M219.9 291.7L222.9 285.7M230.9 295.7L235.8 291.7M248.8 299.7L252.7 295.7M252.7 295.7L254.7 285.7M254.7 285.7L258.7 279.8M280.6 297.7L284.6 291.7M305.4 305.6L309.4 302.7M309.4 302.7L314.4 293.7M318.4 299.7L321.4 295.7M321.4 295.7L322.9 275.8M322.9 275.8L325.3 271.8M326.3 289.7L328.3 284.8M328.3 284.8L334.3 275.8M338.3 283.8L341.3 277.8M346.2 295.7L348.2 291.7M354.2 301.7L358.2 288.7M372.1 302.7L376.1 294.7M385.0 296.7L391.0 284.8M391.0 284.8L395.9 271.8M409.9 276.5L414.4 273.2M414.4 273.2L416.6 264.4M447.5 289.8L453.0 283.1M458.6 349.4L459.1 320.7M463.0 325.1L464.1 309.7M487.3 357.2L486.2 338.4M490.6 337.3L493.9 334.0M493.9 334.0L497.2 327.3M505.0 339.5L509.4 327.3M513.8 335.1L517.1 326.2M517.1 326.2L520.4 305.2M520.4 305.2L526.0 299.7M526.0 299.7L528.2 290.9M531.5 294.2L533.7 290.9M533.7 290.9L537.0 285.4M537.0 285.4L543.6 277.6M552.5 289.8L558.0 282.0M579.0 293.1L583.4 279.8M587.8 282.0L592.3 276.5M623.2 311.7L627.6 306.1M627.6 306.1L629.8 295.1M629.8 295.1L632.0 282.9M632.0 282.9L634.3 273.0M644.2 278.5L650.8 269.7M687.3 280.7L691.7 275.2M691.7 275.2L698.3 269.7M712.7 278.5L717.1 275.2M739.2 274.1L744.8 270.8M744.8 270.8L750.3 265.2M750.3 265.2L756.9 260.8M756.9 260.8L764.6 256.4M782.3 259.7L787.8 254.2M787.8 254.2L790.1 240.9M800.0 252.0L802.7 244.3M802.7 244.3L806.0 237.7M806.0 237.7L812.7 232.2M819.3 244.3L825.9 236.6M844.7 254.3L849.1 244.3M861.3 260.9L867.9 256.5M887.8 277.5L891.1 267.5M940.9 312.8L943.6 304.0M943.6 304.0L944.2 285.2M949.7 304.0L954.1 296.2M969.6 321.7L977.3 313.9M977.3 313.9L982.8 308.4M987.3 312.8L995.0 307.3M995.0 307.3L999.9 304.1M1002.2 307.4L1008.8 300.8M1008.8 300.8L1009.9 294.1M1009.9 294.1L1014.3 285.3M1023.1 293.0L1028.7 286.4M1028.7 286.4L1032.0 277.6M1051.9 295.2L1056.3 284.2M1061.8 289.7L1067.3 286.4M1121.5 318.5L1127.0 309.6M1127.0 309.6L1130.3 305.2M1142.5 317.3L1148.0 312.9M1153.5 329.5L1158.0 324.0M1158.0 324.0L1162.4 318.5M1162.4 318.5L1166.8 314.0M1169.0 324.0L1175.6 317.3M1182.3 317.3L1188.9 311.8M1188.9 311.8L1190.0 310.8M1208.2 315.8L1211.5 304.2M1211.5 304.2L1216.5 295.9M1233.1 297.5L1236.4 287.6M1236.4 287.6L1241.3 277.6M1241.3 277.6L1242.2 261.1M1242.2 261.1L1244.7 256.1M1244.7 256.1L1247.1 246.2M1266.2 277.6L1271.2 271.0M1289.4 271.0L1294.4 267.7M1294.4 267.7L1297.7 261.1M1297.7 261.1L1302.6 254.4M1302.6 254.4L1304.3 239.5M1304.3 239.5L1308.4 236.2M1308.4 236.2L1312.6 232.9M1315.9 241.2L1324.2 236.2M1324.2 236.2L1330.8 227.9M1330.8 227.9L1335.8 214.7M1335.8 214.7L1337.4 193.1M1339.1 239.5L1344.1 203.1M1344.1 203.1L1345.7 193.1M1360.6 223.0L1365.6 213.0M1367.3 223.0L1369.5 191.9M1369.5 191.9L1371.7 168.4M1371.7 168.4L1372.4 138.9M1372.4 138.9L1375.3 124.2M1375.3 124.2L1378.6 93.3M1390.8 200.8L1394.5 177.2M1394.5 177.2L1397.4 169.8M1403.3 197.8L1407.7 187.5M1410.7 202.2L1413.6 162.5M1419.5 175.7L1425.4 156.6M1429.8 197.8L1432.8 171.3M1432.8 171.3L1440.1 147.7M1440.1 147.7L1443.1 122.7M1447.5 136.0L1451.9 115.3M1462.2 162.5L1465.2 156.6M1472.5 186.0L1477.0 165.4M1481.4 174.3L1487.3 156.6M1497.6 168.4L1504.9 162.5M1504.9 162.5L1509.4 153.6M1513.8 171.3L1518.2 163.9M1524.1 178.7L1530.0 161.0M1534.4 189.0L1540.0 172.8M1540.0 172.8L1543.0 160.8M1553.4 193.6L1554.9 171.8M1554.9 171.8L1557.9 150.9M1570.8 184.7L1573.8 169.8M1576.8 188.7L1578.8 179.7M1578.8 179.7L1580.7 161.8M1588.7 175.7L1591.7 163.8M1604.6 196.6L1606.6 183.7M1609.6 187.7L1613.6 179.7M1613.6 179.7L1615.6 172.8M1615.6 172.8L1617.5 165.8M1617.5 165.8L1623.5 161.8M1628.5 174.8L1630.5 165.8M1635.4 166.8L1638.4 156.9M1638.4 156.9L1639.4 147.9M1666.3 168.8L1671.3 162.8M1685.2 179.7L1688.2 170.8M1706.1 180.7L1712.0 176.7M1720.0 195.6L1724.0 189.7M1724.0 189.7L1729.9 175.7M1739.2 180.6L1742.0 177.0M1742.0 177.0L1744.7 166.8M1744.7 166.8L1750.3 162.2M1753.9 173.3L1759.5 165.9M1763.1 170.5L1766.8 167.7M1783.4 180.6L1787.1 177.0M1794.5 174.2L1800.0 166.8M1800.0 166.8L1804.6 159.5M1804.6 159.5L1811.9 152.1M1830.4 169.6L1833.1 163.1M1851.5 187.1L1854.3 175.1" stroke="#ff1010" stroke-width="2.4" fill="none" stroke-dasharray="6 1.5" clip-path="url(#c1)" shape-rendering="auto"/>
<path d="M14.0 558.7h3M19.5 546.5h3M21.2 543.2h3M24.5 535.5h3M38.3 543.2h3M40.0 547.6h3M46.1 549.8h3M53.8 564.8h3M66.5 568.1h3M70.9 568.1h3M64.9 580.6h3M82.0 574.1h3M101.3 574.1h3M123.4 591.6h3M134.5 583.9h3M137.2 579.1h3M146.6 593.1h3M163.7 588.5h3M168.7 596.2h3M213.9 583.9h3M231.8 583.9h3M235.3 583.9h3M249.2 591.6h3M263.6 594.8h3M268.6 607.2h3M276.6 611.7h3M281.0 608.7h3M286.0 618.2h3M287.5 622.7h3M289.0 627.6h3M294.5 621.2h3M301.9 618.7h3M305.9 615.2h3M314.9 612.7h3M316.8 617.7h3M335.7 588.3h3M353.7 614.7V621.7M356.6 621.2h3M375.5 608.7h3M377.5 605.7h3M385.0 613.7h3M403.3 603.5h3M423.6 602.3h3M430.8 611.9h3M444.0 619.1h3M463.7 665.2h3M478.1 675.9h3M476.3 683.7h3M493.1 668.1h3M496.0 674.1h3M503.8 683.7h3M506.2 677.7h3M508.6 686.7h3M511.6 677.7h3M518.2 666.3h3M542.1 657.4h3M548.1 665.8h3M566.1 658.6h3M584.0 656.2h3M597.2 653.8h3M602.5 654.2h3M617.4 666.1h3M625.4 662.7h3M630.8 644.8h3M635.8 636.8h3M645.2 628.8h3M649.2 623.9h3M656.7 628.8h3M655.2 632.3h3M670.1 632.3h3M675.6 630.3h3M677.1 636.8h3M682.5 645.3h3M703.9 636.8h3M705.9 643.8h3M712.9 638.3h3M719.8 631.3h3M725.8 630.3h3M734.3 627.3h3M737.7 630.8h3M755.6 622.9h3M759.6 623.4h3M747.7 628.8h3M776.5 626.9h3M792.4 635.3h3M794.5 634.8h3M806.4 640.3h3M812.9 644.8h3M816.4 647.7h3M834.8 633.8h3M842.7 636.8h3M856.2 613.9h3M860.1 621.4h3M873.1 621.4h3M877.5 633.3h3M883.5 647.7h3M889.0 648.2h3M899.4 657.2h3M902.9 660.2h3M919.8 660.2h3M908.9 672.6h3M924.8 672.6h3M917.8 675.6h3M934.7 679.1h3M944.7 679.1h3M946.2 633.8h3M954.1 632.3h3M956.1 636.8h3M947.7 641.8h3M949.6 644.8h3M960.6 649.2h3M969.5 657.2h3M974.5 657.2h3M978.5 659.2h3M1006.7 635.4h3M1012.8 626.0h3M1016.1 630.4h3M1024.4 646.4h3M1037.7 646.4h3M1039.3 652.5h3M1060.9 641.4h3M1064.7 637.0h3M1070.3 639.8h3M1076.3 637.0h3M1085.7 630.4h3M1090.2 626.0h3M1096.6 638.7V643.6M1123.3 650.8h3M1126.6 652.5h3M1129.9 654.1h3M1133.3 650.8h3M1137.7 652.5h3M1141.5 661.9h3M1144.3 661.9h3M1146.0 658.6h3M1152.0 665.2h3M1164.2 666.3h3M1167.3 669.6V673.5M1173.0 682.9h3M1178.6 686.7h3M1181.9 692.3h3M1190.9 685.9h3M1193.8 693.3h3M1198.2 697.7h3M1201.2 703.6h3M1205.6 714.6h3M1219.6 694.0h3M1221.8 685.2h3M1226.2 683.7h3M1232.1 679.0h3M1240.2 661.6h3M1241.7 658.7h3M1248.3 655.7h3M1260.1 647.6h3M1264.5 663.8h3M1268.2 661.6h3M1272.6 655.7h3M1281.4 653.5h3M1283.6 650.6h3M1286.6 652.0h3M1288.1 644.7h3M1294.0 641.7h3M1296.9 638.1h3M1300.6 630.7h3M1321.2 560.7h3M1320.9 559.6h3M1340.7 457.2V467.7M1377.7 488.7h3M1389.1 578.9h3M1403.1 585.0h3M1411.9 527.2h3M1422.4 540.4h3M1435.5 543.0h3M1441.6 526.4h3M1446.0 533.4h3M1448.6 533.4h3M1452.1 533.4h3M1446.9 544.7h3M1458.2 519.4h3M1464.4 530.7h3M1468.7 558.7h3M1470.5 568.4h3M1488.0 525.5h3M1487.6 526.1h3M1498.8 532.2h3M1501.8 521.0h3M1506.3 516.5h3M1520.0 505.8h3M1537.2 550.9h3M1542.8 544.3h3M1552.9 544.3h3M1563.6 539.7h3M1569.6 547.3h3M1565.1 552.4h3M1568.6 550.9h3M1578.8 550.9h3M1603.6 571.1h3M1612.7 551.9h3M1614.2 541.3h3M1617.2 544.3h3M1637.5 544.3h3M1648.6 550.9h3M1664.3 536.7h3M1687.2 531.7h3M1691.8 533.4h3M1696.9 530.6h3M1700.4 547.7h3M1756.4 536.9h3M1770.7 555.7h3M1777.0 558.6h3M1798.7 547.7h3M1802.7 546.0h3M1809.6 536.9h3M1814.2 531.7h3M1820.5 536.9h3M1822.8 543.2h3M1832.5 546.0h3M1826.8 554.0h3M1846.2 564.9h3M1861.1 571.8h3M1866.8 572.9h3M1896.5 572.9h3M1894.8 582.1h3" stroke="#f0e68c" stroke-width="2.2" fill="none" clip-path="url(#c2)" shape-rendering="auto"/>
<path d="M33.4 541.5h3M49.2 555.4V559.2M64.7 588.0V598.5M91.2 572.5V579.7M156.0 599.3h3M239.8 586.4V590.3M268.6 595.8V602.8M273.1 615.2h3M302.9 622.7h3M321.8 586.4V599.8M326.3 608.7V615.7M341.2 584.9V588.8M343.2 584.9V594.8M347.2 601.8V608.7M351.2 595.8V611.7M353.1 613.7h3M363.1 606.7V614.7M366.6 612.7h3M371.1 617.7V630.6M374.0 602.8h3M388.5 613.7h3M394.4 598.3h3M417.7 589.2h3M428.7 603.5V611.9M435.3 615.5V621.5M441.9 603.5V607.1M449.1 621.5V634.6M452.7 621.5V649.0M456.3 652.6V657.4M464.0 653.8V664.6M458.0 664.6V689.7M468.2 666.9V681.3M471.5 672.9h3M475.4 682.5V692.1M482.6 678.9V683.7M490.7 677.7h3M516.7 670.5V674.1M520.9 658.6V665.8M527.5 655.0V661.0M531.7 658.6V664.6M536.4 657.4V663.4M544.5 662.2h3M561.3 657.4h3M570.3 668.7h3M604.0 644.8V652.7M613.9 660.7h3M666.1 635.3h3M679.1 642.8h3M727.8 628.8h3M739.7 635.8h3M751.7 624.9h3M758.6 627.3h3M744.7 627.3h3M773.5 625.4h3M795.4 639.8h3M796.5 639.8h3M802.5 640.8h3M808.4 644.8h3M814.4 640.8h3M832.3 629.8h3M836.3 626.4h3M839.2 635.3h3M844.2 633.8h3M852.2 612.9V617.9M864.6 617.9h3M877.0 628.8V632.8M881.5 637.8h3M895.4 652.7V659.7M907.9 657.7h3M916.3 668.6V675.6M923.3 668.6V671.6M925.8 682.0h3M938.2 687.5V697.5M957.6 641.8h3M959.1 645.7h3M1029.9 635.4h3M1034.8 639.8V643.6M1050.9 650.8h3M1071.4 640.9h3M1084.1 628.7h3M1091.8 629.3h3M1096.2 637.0h3M1140.8 660.2V667.4M1167.5 686.7h3M1199.0 702.1V713.2M1263.8 646.2V651.3M1270.4 655.7h3M1280.0 655.7V658.7M1303.5 593.1h3M1308.0 575.5V579.1M1308.4 575.4V579.7M1312.7 545.6V551.7M1319.7 551.7V555.2M1334.6 503.6V516.7M1346.0 432.7V446.7M1350.4 427.5V457.2M1355.6 434.5V452.0M1358.2 459.0V469.5M1360.9 476.5V499.2M1367.9 483.5V487.0M1374.9 466.0V480.0M1384.5 518.5V536.0M1387.4 550.9h3M1399.4 560.5V579.7M1399.6 579.7h3M1418.0 539.5h3M1426.5 539.5V546.5M1428.2 551.7V567.5M1431.1 575.4h3M1435.2 548.2V552.6M1458.0 515.0V519.4M1518.0 503.3h3M1546.3 550.9V557.0M1550.9 539.7V549.9M1555.5 538.2h3M1572.7 571.1h3M1588.4 547.8h3M1595.0 547.8h3M1601.5 569.6h3M1690.1 536.9h3M1699.6 541.5V550.0M1713.5 564.9h3M1720.2 561.5V582.1M1720.4 576.3h3M1751.3 542.0h3M1766.1 554.0h3M1775.3 556.9h3M1815.9 537.4h3M1835.3 554.0h3M1841.6 564.3h3M1890.8 586.1h3" stroke="#1e88ff" stroke-width="2.2" fill="none" clip-path="url(#c2)" shape-rendering="auto"/>
<path d="M16.6 544.3V549.8M22.9 531.0h3M41.1 544.9h3M93.0 586.9h3M174.8 589.8h3M298.5 616.7V619.7M301.4 614.7V619.7M304.9 618.7h3M310.9 613.7h3M323.8 600.8V608.7M329.3 592.8V603.8M332.3 584.9V592.8M349.2 592.8V596.8M360.1 609.7V616.7M374.0 604.8V615.7M392.9 602.8V618.7M398.9 589.8V594.8M401.2 590.3V595.1M411.4 597.5V610.7M416.8 588.0V595.1M438.3 593.9V620.3M453.0 651.4h3M461.0 653.8V666.9M470.3 666.3h3M484.1 684.3h3M488.6 672.9V678.9M500.2 678.9h3M516.7 669.3V671.7M524.5 651.4V658.6M527.8 659.8h3M556.5 659.2h3M571.5 665.2h3M579.8 668.1h3M591.5 652.6V658.6M613.9 654.2V657.7M627.8 650.2h3M641.8 628.8V635.8M661.7 632.8h3M672.6 628.3h3M690.5 637.8h3M709.9 640.8h3M729.3 624.9h3M749.7 623.4h3M771.5 623.4h3M788.5 627.3h3M817.9 645.7h3M819.4 641.3h3M822.3 631.8V637.8M825.3 630.8h3M845.7 631.3h3M849.7 609.0V613.9M853.2 616.4h3M863.1 611.9h3M880.0 634.3h3M897.9 653.2h3M911.8 665.1h3M919.8 663.6V667.6M931.7 676.6h3M929.8 683.5V688.5M940.7 690.5V696.5M944.2 674.6V685.5M969.0 653.7V662.7M981.5 660.2h3M994.0 641.4h3M1046.0 651.9h3M1055.9 639.8h3M1059.1 642.0V645.3M1076.2 639.8V645.3M1082.3 630.4V635.4M1087.9 627.6h3M1121.1 663.5h3M1171.8 680.7V685.1M1176.9 678.5h3M1204.9 705.8V710.2M1209.3 697.7V705.8M1210.7 693.3h3M1273.3 652.0h3M1303.6 597.6V618.2M1306.5 586.5V591.7M1309.9 564.4V579.1M1311.7 560.0V564.4M1316.1 564.4V571.0M1306.6 586.7V592.0M1310.1 564.0V579.7M1311.9 545.6V564.0M1316.2 564.0V571.9M1325.0 543.0V551.7M1328.5 522.0V537.7M1332.0 515.0V523.7M1334.9 495.7h3M1338.1 471.2V488.7M1342.5 431.0V476.5M1344.2 422.2V432.7M1348.6 432.7V441.5M1353.0 445.0V457.2M1370.5 480.0V499.2M1372.2 471.2V485.2M1377.5 475.6V484.4M1386.2 517.6V529.0M1393.2 563.1V578.0M1396.7 567.5V578.0M1405.5 558.7V568.4M1408.1 548.2V557.0M1409.2 544.7h3M1412.1 519.4V524.6M1416.9 532.5V536.0M1430.9 567.5V570.1M1457.1 518.5V535.1M1461.5 527.2V530.7M1503.3 508.9h3M1516.5 497.7h3M1527.6 508.9V512.4M1588.4 550.9V559.0M1609.6 572.7h3M1612.7 553.9V562.5M1686.4 532.9V541.5M1694.7 528.9h3M1814.0 533.4V537.4M1818.2 535.2h3" stroke="#ff1010" stroke-width="2.2" fill="none" clip-path="url(#c2)" shape-rendering="auto"/>
<path d="M12.5 951.8 L17.0 951.8 L18.0 959.8 L19.0 969.7 L21.9 957.8 L24.9 962.8 L29.9 974.7 L32.9 967.7 L36.9 969.7 L38.8 978.7 L42.8 977.7 L46.8 990.6 L49.8 975.7 L55.7 975.7 L58.7 966.7 L62.7 977.7 L65.7 961.8 L68.7 974.7 L71.7 982.7 L75.6 971.7 L79.6 985.6 L81.6 998.6 L85.6 990.6 L90.6 995.6 L92.5 971.7 L96.5 965.7 L102.5 958.8 L105.5 969.7 L107.5 979.7 L113.4 979.7 L116.4 969.7 L123.4 967.7 L125.4 980.7 L127.4 957.8 L133.3 957.8 L135.3 944.9 L139.3 954.8 L142.3 977.7 L148.2 988.6 L151.2 973.7 L156.2 986.6 L161.2 962.8 L165.1 960.8 L170.1 967.7 L173.1 963.8 L177.1 978.7 L181.1 955.8 L186.0 961.8 L189.0 970.7 L194.0 960.8 L200.0 977.7 L203.9 968.7 L210.0 969.7 L209.9 965.5 L214.9 967.5 L220.9 966.5 L222.9 961.6 L229.8 965.5 L232.8 968.5 L238.8 968.5 L240.8 960.6 L243.8 965.5 L248.7 965.5 L253.7 967.5 L255.2 951.6 L259.7 941.7 L263.6 956.6 L269.6 953.6 L271.6 941.7 L276.6 933.7 L279.6 941.7 L284.5 948.6 L287.5 935.7 L292.5 928.7 L297.5 934.7 L299.5 947.6 L304.4 945.6 L309.4 953.6 L312.4 942.7 L315.4 939.7 L317.4 951.6 L319.3 945.6 L320.3 913.8 L321.8 893.9 L323.3 911.8 L324.3 929.7 L326.3 939.7 L328.3 919.8 L330.3 931.7 L333.3 947.6 L337.2 952.6 L340.2 944.6 L344.2 947.6 L349.2 953.6 L351.2 959.6 L353.2 945.6 L359.1 925.7 L363.1 942.7 L369.1 939.7 L374.0 947.6 L384.0 945.6 L386.0 923.8 L391.9 917.8 L398.9 921.8 L400.0 924.0 L402.2 939.4 L404.4 942.8 L407.7 917.3 L413.3 929.5 L416.6 917.3 L419.9 924.0 L423.2 920.7 L425.4 927.3 L428.7 906.3 L434.3 904.1 L436.5 895.2 L438.7 901.9 L439.8 929.5 L445.3 929.5 L448.6 917.3 L451.9 901.9 L455.2 908.5 L457.5 928.4 L461.9 920.7 L465.2 899.7 L469.6 893.0 L471.8 904.1 L474.0 921.8 L479.6 912.9 L481.8 932.8 L485.1 943.9 L488.4 929.5 L492.8 936.1 L496.1 925.1 L501.7 919.6 L503.9 911.8 L506.1 921.8 L510.5 905.2 L514.9 928.4 L517.1 911.8 L520.4 896.4 L524.9 900.8 L527.1 884.2 L532.6 884.2 L537.0 868.7 L541.4 865.4 L543.6 872.0 L548.1 867.6 L552.5 869.8 L555.8 864.3 L560.2 876.5 L565.7 878.7 L571.3 876.5 L572.4 861.0 L575.7 868.7 L580.1 878.7 L583.4 855.5 L586.7 873.1 L592.3 867.6 L595.6 876.5 L600.0 880.9 L600.0 877.3 L604.4 879.6 L609.9 891.7 L614.4 891.7 L617.7 887.3 L622.1 895.0 L624.3 905.0 L627.6 898.3 L632.0 896.1 L635.4 871.8 L638.7 879.6 L643.1 899.4 L647.5 891.7 L655.2 897.2 L657.5 885.1 L664.1 886.2 L666.3 889.5 L669.6 882.9 L676.2 890.6 L679.6 879.6 L684.0 876.2 L687.3 884.0 L690.6 875.1 L693.9 884.0 L699.4 877.3 L702.8 879.6 L706.1 890.6 L710.5 882.9 L714.9 887.3 L718.2 881.8 L722.7 892.8 L728.2 888.4 L732.6 897.2 L739.2 893.9 L744.8 877.3 L749.2 886.2 L753.6 886.2 L756.9 879.6 L761.3 869.6 L768.0 874.0 L772.4 878.5 L779.0 869.6 L784.5 874.0 L787.8 868.5 L790.1 851.9 L794.5 840.9 L800.0 843.1 L800.0 843.8 L803.9 838.7 L812.9 816.8 L816.8 827.1 L821.9 832.2 L823.2 840.0 L828.4 836.1 L833.5 836.1 L838.7 842.6 L840.0 854.2 L845.1 851.6 L849.0 856.7 L850.3 872.2 L854.2 877.4 L855.4 890.3 L860.6 892.8 L863.2 878.7 L865.8 892.8 L869.6 878.7 L877.4 890.3 L881.2 877.4 L883.8 883.8 L890.3 870.9 L894.1 860.6 L899.3 861.9 L900.6 879.9 L904.4 872.2 L910.9 872.2 L918.6 867.1 L921.2 878.7 L926.4 873.5 L928.9 879.9 L932.8 868.3 L934.1 879.9 L939.3 860.6 L941.8 876.1 L947.0 861.9 L948.9 870.9 L949.6 928.9 L952.2 910.9 L956.0 904.4 L958.6 926.4 L962.5 918.6 L966.3 932.8 L970.2 931.5 L975.4 917.3 L983.1 909.6 L988.3 910.9 L994.7 904.4 L997.3 923.8 L1000.0 922.5 L1005.2 921.9 L1010.3 915.4 L1012.9 903.8 L1015.5 911.6 L1019.3 918.0 L1023.2 910.3 L1027.1 916.7 L1028.4 901.2 L1030.9 881.9 L1033.5 892.2 L1038.7 893.5 L1041.3 884.5 L1049.0 888.3 L1052.9 894.8 L1056.7 881.9 L1059.3 894.8 L1064.5 901.2 L1068.3 899.9 L1074.8 905.1 L1079.9 915.4 L1086.4 916.7 L1092.8 921.9 L1096.1 936.1 L1103.2 925.7 L1107.0 930.9 L1110.9 930.9 L1116.1 938.6 L1122.5 946.4 L1124.4 910.3 L1127.7 920.6 L1131.5 907.7 L1139.3 918.0 L1141.8 910.3 L1147.0 910.3 L1150.9 918.0 L1154.7 928.3 L1162.5 915.4 L1167.6 907.7 L1171.5 894.8 L1177.9 889.6 L1180.5 874.2 L1183.1 885.8 L1189.6 869.0 L1193.4 870.3 L1196.0 885.8 L1198.6 874.2 L1199.2 853.5 L1200.0 854.6 L1202.5 869.6 L1207.4 852.1 L1209.9 864.6 L1217.4 849.7 L1222.4 847.2 L1227.3 857.1 L1234.8 864.6 L1239.8 844.7 L1247.2 832.2 L1254.7 847.2 L1262.2 859.6 L1264.7 874.5 L1269.6 852.1 L1274.6 864.6 L1279.6 857.1 L1289.5 864.6 L1294.5 869.6 L1299.5 859.6 L1303.2 864.6 L1306.9 899.4 L1311.9 929.3 L1319.4 921.8 L1324.4 921.8 L1329.3 934.2 L1331.8 956.6 L1336.8 959.1 L1339.3 996.4 L1341.8 1036.2 L1346.7 1018.8 L1351.7 1013.8 L1359.2 1006.4 L1361.7 979.0 L1366.6 969.1 L1371.6 944.2 L1374.1 889.5 L1376.6 852.1 L1381.6 844.7 L1386.5 854.6 L1389.0 884.5 L1394.0 824.8 L1391.5 838.6 L1394.4 823.9 L1398.8 822.4 L1401.8 838.6 L1404.7 832.7 L1407.7 850.4 L1409.1 875.5 L1413.6 876.9 L1416.5 860.7 L1420.9 859.3 L1423.9 843.1 L1428.3 831.3 L1431.2 853.4 L1434.2 797.4 L1437.1 826.9 L1443.0 798.9 L1448.9 797.4 L1450.4 784.1 L1454.1 776.8 L1456.3 790.0 L1457.7 831.3 L1462.2 854.8 L1466.6 844.5 L1469.5 856.3 L1473.9 819.5 L1478.4 813.6 L1479.8 819.5 L1485.7 797.4 L1488.7 798.9 L1491.6 838.6 L1496.0 859.3 L1500.5 868.1 L1506.3 876.9 L1509.3 854.8 L1512.2 876.9 L1516.7 866.6 L1519.6 890.2 L1524.0 902.0 L1529.9 874.0 L1534.3 897.5 L1537.3 910.8 L1538.7 851.9 L1544.6 822.4 L1546.1 841.6 L1553.5 859.3 L1557.9 841.6 L1565.3 863.7 L1568.2 848.9 L1575.6 840.1 L1581.5 826.9 L1585.9 838.6 L1590.0 832.7 L1592.7 826.4 L1597.2 828.6 L1602.7 850.7 L1604.9 837.5 L1611.5 828.6 L1615.9 848.5 L1623.7 830.8 L1629.2 848.5 L1632.5 834.1 L1638.0 837.5 L1640.2 818.7 L1646.9 813.1 L1650.2 822.0 L1655.7 826.4 L1657.9 830.8 L1661.2 826.4 L1666.8 829.7 L1666.8 846.3 L1672.3 841.9 L1674.5 851.8 L1675.6 868.4 L1681.1 868.4 L1687.8 866.2 L1688.9 857.3 L1693.3 852.9 L1697.7 861.8 L1702.1 852.9 L1706.5 861.8 L1709.9 846.3 L1716.5 844.1 L1719.8 824.2 L1722.0 835.2 L1726.4 829.7 L1733.1 807.6 L1737.5 815.4 L1740.8 830.8 L1744.1 804.3 L1747.4 798.8 L1753.0 793.3 L1754.1 813.1 L1756.3 848.5 L1759.0 858.5 L1764.0 850.7 L1767.3 827.5 L1772.8 830.8 L1778.4 833.0 L1785.0 841.9 L1789.9 832.0 L1797.7 828.6 L1799.9 833.1 L1807.6 820.9 L1812.1 824.2 L1816.5 838.6 L1822.0 834.2 L1827.5 839.7 L1833.1 825.3 L1837.5 837.5 L1841.9 845.2 L1845.2 832.0 L1850.7 832.0 L1853.0 846.3 L1856.3 827.5 L1859.6 841.9 L1864.0 832.0 L1870.6 832.0 L1871.8 850.7 L1876.2 848.5 L1878.4 864.0 L1882.8 870.6 L1886.1 868.4 L1890.5 879.5 L1893.9 861.8 L1897.2 860.7 L1898.3 872.9 L1899.4 807.6" stroke="#ff0000" stroke-width="3.5" fill="none" stroke-linejoin="miter" clip-path="url(#c3)" shape-rendering="auto"/>
</svg>
<svg width="2011" height="80" style="position:absolute;left:0;top:0"><rect x="15.5" y="14.5" width="22" height="22" fill="#f4f4f4"/><path d="M16 15V36H37" stroke="#707070" stroke-width="1.6" fill="none"/><path d="M18 18.5H36M18 22H36M18 25.5H36M18 29H36M18 32.5H36" stroke="#dde" stroke-width="0.8"/><path d="M21 24L23 33L21 34Z" fill="#ff0000"/><rect x="20" y="23.5" width="3" height="10" fill="#ff0000"/><rect x="23.5" y="17" width="2.5" height="15" fill="#1a8cff"/><rect x="27" y="15.5" width="3" height="10" fill="#ff0000"/><rect x="30" y="18" width="2.5" height="11" fill="#1a8cff"/><rect x="33" y="17" width="3" height="13" fill="#ff0000"/><use href="#g0" x="47.0" y="16.5" width="15.5" height="16.0" style="color:#101010;--sw:1.7"/><text x="64" y="32.5" class="tt" textLength="6.5" lengthAdjust="spacingAndGlyphs">1</text><use href="#g1" x="72.0" y="16.5" width="17.0" height="16.0" style="color:#101010;--sw:1.7"/><use href="#g2" x="92.5" y="16.5" width="17.5" height="16.0" style="color:#101010;--sw:1.7"/><text x="112.5" y="32.5" class="tt" textLength="108" lengthAdjust="spacingAndGlyphs">[2027/02]1.00</text><path d="M231 25.5H237" stroke="#101010" stroke-width="1.6"/><use href="#g3" x="244.0" y="16.5" width="15.0" height="16.0" style="color:#101010;--sw:1.7"/><use href="#g0" x="262.0" y="16.5" width="15.5" height="16.0" style="color:#101010;--sw:1.7"/><text x="279" y="32.5" class="tt" textLength="6.5" lengthAdjust="spacingAndGlyphs">1</text><use href="#g1" x="286.0" y="16.5" width="17.0" height="16.0" style="color:#101010;--sw:1.7"/><use href="#g2" x="305.0" y="16.5" width="17.5" height="16.0" style="color:#101010;--sw:1.7"/><text x="326.5" y="32.5" class="tt" textLength="109" lengthAdjust="spacingAndGlyphs">[2027/02]1.00</text><g stroke="#6c6c6c" stroke-width="1.6" fill="none"><rect x="1877" y="15.5" width="15" height="20" fill="#f6f6f6"/><rect x="1883" y="20.5" width="14" height="11" fill="#e8e8e8"/><path d="M1884 24H1896M1884 27.5H1896M1887.5 21V31M1891 21V31M1894 21V31" stroke-width="0.7" stroke="#aaa"/></g><rect x="1911.5" y="11.5" width="26" height="27" rx="4" fill="url(#btng)" stroke="#808080" stroke-width="2"/><rect x="1942.5" y="11.5" width="26" height="27" rx="4" fill="url(#btng)" stroke="#808080" stroke-width="2"/><rect x="1973.5" y="11.5" width="26" height="27" rx="4" fill="url(#btng)" stroke="#808080" stroke-width="2"/><path d="M1918.5 30H1927.5" stroke="#555" stroke-width="2.5"/><rect x="1950" y="20" width="11" height="11" fill="none" stroke="#555" stroke-width="1.6"/><path d="M1950 21H1961" stroke="#555" stroke-width="2"/><path d="M1981 19.5L1992.5 31M1992.5 19.5L1981 31" stroke="#555" stroke-width="2"/><defs><linearGradient id="btng" x1="0" y1="0" x2="0" y2="1"><stop offset="0" stop-color="#fafafa"/><stop offset="1" stop-color="#d4d4d4"/></linearGradient></defs><use href="#g0" x="17.0" y="51.0" width="19.0" height="17.0" style="color:#202020;--sw:1.6"/><text x="52.5" y="67" class="tb" textLength="65" lengthAdjust="spacingAndGlyphs">2027/02</text><use href="#g3" x="223.0" y="51.0" width="17.0" height="17.0" style="color:#202020;--sw:1.6"/><use href="#g0" x="241.0" y="51.0" width="19.0" height="17.0" style="color:#202020;--sw:1.6"/><text x="275.5" y="67" class="tb" textLength="65" lengthAdjust="spacingAndGlyphs">2027/02</text><use href="#g1" x="446.0" y="51.0" width="18.0" height="17.0" style="color:#202020;--sw:1.6"/><use href="#g2" x="465.0" y="51.0" width="18.0" height="17.0" style="color:#202020;--sw:1.6"/><path d="M490.5 57.5H500L495.2 63Z" fill="#111"/><text x="587.5" y="67" class="tb">1</text><use href="#g1" x="597.0" y="51.0" width="18.0" height="17.0" style="color:#202020;--sw:1.6"/><use href="#g2" x="616.0" y="51.0" width="18.0" height="17.0" style="color:#202020;--sw:1.6"/><path d="M642.5 57.5H652L647.2 63Z" fill="#111"/><rect x="127.5" y="46.5" width="76" height="27.5" fill="#fff" stroke="#b8bcc4"/><text x="132.5" y="64.5" class="inp" textLength="28" lengthAdjust="spacingAndGlyphs">1.00</text><rect x="179.5" y="49.5" width="21" height="20.5" fill="#f0f0f0" stroke="#a8a8a8"/><path d="M180 59.7H200.5" stroke="#a8a8a8" stroke-width="1.2"/><path d="M186 56.5H194L190 52Z M186 62.5H194L190 67Z" fill="#111"/><rect x="350.5" y="46.5" width="76" height="27.5" fill="#fff" stroke="#b8bcc4"/><text x="355.5" y="64.5" class="inp" textLength="28" lengthAdjust="spacingAndGlyphs">1.00</text><rect x="402.5" y="49.5" width="21" height="20.5" fill="#f0f0f0" stroke="#a8a8a8"/><path d="M403 59.7H423.5" stroke="#a8a8a8" stroke-width="1.2"/><path d="M409 56.5H417L413 52Z M409 62.5H417L413 67Z" fill="#111"/><rect x="506.5" y="46.5" width="71" height="27.5" fill="#fff" stroke="#b8bcc4"/><text x="511.5" y="64.5" class="inp" textLength="35" lengthAdjust="spacingAndGlyphs">1200</text><rect x="553.5" y="49.5" width="21" height="20.5" fill="#f0f0f0" stroke="#a8a8a8"/><path d="M554 59.7H574.5" stroke="#a8a8a8" stroke-width="1.2"/><path d="M560 56.5H568L564 52Z M560 62.5H568L564 67Z" fill="#111"/><path d="M211 52V72" stroke="#a0a4ac" stroke-width="1"/><path d="M212 52V72" stroke="#f4f6f8" stroke-width="1"/><path d="M435 52V72" stroke="#a0a4ac" stroke-width="1"/><path d="M436 52V72" stroke="#f4f6f8" stroke-width="1"/><path d="M664 52V72" stroke="#a0a4ac" stroke-width="1"/><path d="M665 52V72" stroke="#f4f6f8" stroke-width="1"/><path d="M710 52V72" stroke="#a0a4ac" stroke-width="1"/><path d="M711 52V72" stroke="#f4f6f8" stroke-width="1"/><path d="M863 52V72" stroke="#a0a4ac" stroke-width="1"/><path d="M864 52V72" stroke="#f4f6f8" stroke-width="1"/><path d="M953 52V72" stroke="#a0a4ac" stroke-width="1"/><path d="M954 52V72" stroke="#f4f6f8" stroke-width="1"/><rect x="669" y="46" width="26" height="27" fill="#b4b8bc"/><path d="M670 73V47H695" stroke="#6c6c6c" stroke-width="2" fill="none"/><path d="M670 73H695V47" stroke="#fff" stroke-width="1.2" fill="none"/><rect x="714" y="46" width="27" height="27" fill="#b4b8bc"/><path d="M715 73V47H741" stroke="#6c6c6c" stroke-width="2" fill="none"/><path d="M715 73H741V47" stroke="#fff" stroke-width="1.2" fill="none"/><rect x="673" y="49" width="20" height="22" fill="#f8f8f0"/><path d="M674 52.5H692M674 59H692M674 62.5H692M674 66H692M674 69.5H692" stroke="#c8c8c8" stroke-width="0.8"/><path d="M677 49.5V70M674 55.8H693" stroke="#3838c0" stroke-width="1.5"/><path d="M690 68L682 60M681 60H686M681 60V65" stroke="#9020c0" stroke-width="2.4" fill="none"/><path d="M719.5 51.5L733 57.5L728.5 60L736 67.5L733.5 70L726 62.5L723.5 66.5Z" fill="#f4f4ff" stroke="#6040d0" stroke-width="1.8" stroke-linejoin="round"/><path d="M753 60Q752 57 755 58L758 61V52.5Q758 50 760 50.5Q762 51 762 53V50Q762 48.5 764 48.8Q766 49 766 51V51.5Q766 50 768 50.5Q770 51 769.8 53V54Q770 52.8 771.3 53.5Q772.5 54.5 772 57V63Q771.5 68.5 768.5 70.5H760Q757 68 753 60Z" fill="#fff8e0" stroke="#e09820" stroke-width="1.8" stroke-linejoin="round"/><path d="M790 64.5L804 50.5Q806.5 48.5 808.3 50.3Q810 52 808 54.5L794 68.5L788 70.5Z" fill="#fbe8c0" stroke="#e8a030" stroke-width="1.8" stroke-linejoin="round"/><path d="M787 71L789.5 67.5L791.5 69.5Z" fill="#a06020"/><path d="M826 64.5L840 50.5Q842.5 48.5 844.3 50.3Q846 52 844 54.5L830 68.5L824 70.5Z" fill="#c8d8ff" stroke="#2050e0" stroke-width="1.8" stroke-linejoin="round"/><path d="M834.5 65L840 59.5L845.5 65L840 70.5Z" fill="#0a2878"/><path d="M837.5 65h5M840 62.5v5" stroke="#8aa0c8" stroke-width="0.9" stroke-dasharray="1 1.2"/><rect x="871" y="50.5" width="20.5" height="19" fill="#f4f4ee"/><path d="M871 50V70H892" stroke="#808080" stroke-width="1.4" fill="none"/><path d="M874.5 69V61M879.5 69V52M884.5 69V55M889 69V61.5" stroke="#1a80ff" stroke-width="3"/><path d="M896 57.5H905L900.5 63Z" fill="#111"/><rect x="915" y="50.5" width="20.5" height="19" fill="#f4f4ee"/><path d="M915 49V70H936" stroke="#808080" stroke-width="1.4" fill="none"/><path d="M918.5 69V61.5M922.5 69V50.5M927 69V53M931 69V57.5" stroke="#1a80ff" stroke-width="2.4"/><path d="M917.5 52.5L933 67.5M933 52.5L917.5 67.5" stroke="#ff2020" stroke-width="2"/><path d="M970 53Q961 53.5 961 61.5Q961.5 69.5 970 70Q974.5 70 977 67" stroke="#1a90ff" stroke-width="3" fill="none"/><path d="M966.5 48.5L974 49.5L971 56Z" fill="#1a60ff"/><text x="970" y="65" class="rr">R</text><path d="M1967 68.5L1975 60.5" stroke="#4838f0" stroke-width="4.2" stroke-linecap="round"/><path d="M1974 61Q1971.5 55 1976 51Q1979 49.5 1980.8 50.5L1978.5 54.5L1981 56.5L1984 53Q1985 56.5 1982 59.5Q1979 61.5 1975.5 60.5" fill="#f4f0ff" stroke="#7060e0" stroke-width="1.8" stroke-linejoin="round"/></svg>
</body></html>
